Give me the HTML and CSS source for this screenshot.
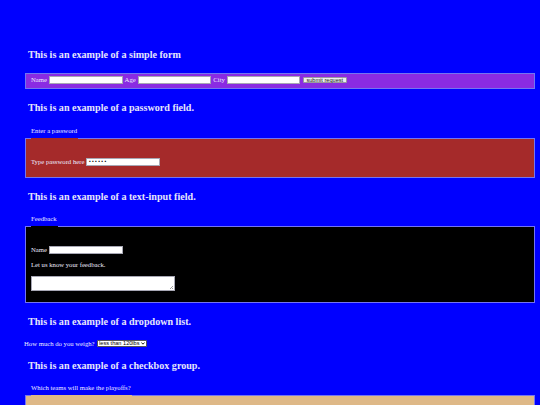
FILE: index.html
```html
<!DOCTYPE html>
<html lang="en">
<head>
<meta charset="utf-8">
<title>Form examples</title>
<link rel="stylesheet" href="styles.css">
</head>
<body>
<div class="page">
  <h2 class="title">This is an example of a simple form</h2>
  <fieldset class="box box-violet">
    <div class="row">
      <label>Name</label><input class="field" type="text">
      <label>Age</label><input class="field" type="text">
      <label>City</label><input class="field" type="text">
      <button class="btn" type="button">submit request</button>
    </div>
  </fieldset>

  <h2 class="title">This is an example of a password field.</h2>
  <fieldset class="box box-brown">
    <legend class="legend">Enter a password</legend>
    <div class="row">
      <label>Type password here</label><input class="field field-pass" type="password" value="secret">
    </div>
  </fieldset>

  <h2 class="title">This is an example of a text-input field.</h2>
  <fieldset class="box box-black">
    <legend class="legend">Feedback</legend>
    <div class="stack">
      <div class="row">
        <label>Name</label><input class="field" type="text">
      </div>
      <div class="line">Let us know your feedback.</div>
      <textarea class="area"></textarea>
    </div>
  </fieldset>

  <h2 class="title">This is an example of a dropdown list.</h2>
  <div class="row row-select">
    <label>How much do you weigh?</label>
    <span class="select-wrap">
      <select class="select">
        <option>less than 120lbs</option>
        <option>120 - 160lbs</option>
        <option>more than 160lbs</option>
      </select>
      <svg class="chev" width="4" height="3" viewBox="0 0 4 3"><polyline points="0.4,0.5 2,2.2 3.6,0.5" fill="none" stroke="#000" stroke-width="0.9"/></svg>
    </span>
  </div>

  <h2 class="title">This is an example of a checkbox group.</h2>
  <fieldset class="box box-tan">
    <legend class="legend">Which teams will make the playoffs?</legend>
    <div class="tan-body"></div>
  </fieldset>
</div>
</body>
</html>
```

FILE: styles.css
```css
html, body {
  margin: 0;
  padding: 0;
  background: #0000ff;
}

body {
  font-family: "Liberation Serif", "Times New Roman", serif;
  font-size: 6.7px;
  color: #ececff;
}

.page {
  padding: 36px 3px 40px 23px;
}

.title {
  font-size: 10.1px;
  line-height: 12px;
  font-weight: bold;
  margin: 12.6px 0 12.6px 5px;
  color: #e6e6fb;
}

.box {
  margin: 0 2px;
  border: 1px solid #7474f2;
  padding: 2px 5px 4px 5px;
  min-width: 0;
}

.box-violet { background: #8a2be2; }
.box-brown { background: #a52a2a; padding: 8px 5px 11px 5px; }
.box-black { background: #000000; padding: 8px 5px 11px 5px; }
.box-tan { background: #deb887; padding: 8px 5px 11px 5px; }

.tan-body {
  height: 40px;
}

.legend {
  font-size: 6.7px;
  line-height: 8px;
  padding: 0 1px 15px 0;
  color: #ececff;
}

.row {
  display: flex;
  align-items: center;
  gap: 2px;
  height: 8.3px;
  line-height: 8px;
}

.stack {
  display: flex;
  flex-direction: column;
  align-items: flex-start;
  gap: 6.7px;
}

.line {
  line-height: 8px;
}

.field {
  box-sizing: border-box;
  width: 73.6px;
  height: 8.3px;
  margin: 0;
  padding: 0 1px;
  border: 1px solid #a7a7b4;
  background: #ffffff;
  font-family: "Liberation Sans", Arial, sans-serif;
  font-size: 5.6px;
  color: #000;
  outline: none;
}

.field-pass {
  font-family: "DejaVu Sans", sans-serif;
  font-size: 4.6px;
  letter-spacing: 0.4px;
  color: #000;
}

.btn {
  box-sizing: border-box;
  height: 6px;
  margin: 0 0 0 0.5px;
  padding: 0 2.5px;
  border: 1px solid #9a9aa0;
  border-radius: 1px;
  background: #efefef;
  font-family: "Liberation Sans", Arial, sans-serif;
  font-size: 5.6px;
  line-height: 3.6px;
  color: #111;
}

.area {
  box-sizing: border-box;
  display: block;
  width: 144px;
  height: 15.3px;
  margin: 0;
  padding: 1px;
  border: 1px solid #a7a7b4;
  resize: none;
  outline: none;
  background:
    linear-gradient(135deg, transparent 0 55%, #a0a0a0 55% 66%, transparent 66% 77%, #a0a0a0 77% 88%, transparent 88%) no-repeat right 1px bottom 1px / 4px 4px,
    #ffffff;
}

.row-select {
  height: 6.7px;
  margin-left: 1px;
}

.select-wrap {
  position: relative;
  display: inline-flex;
}

.select {
  appearance: none;
  -webkit-appearance: none;
  box-sizing: border-box;
  width: 50px;
  height: 6.7px;
  margin: 0;
  padding: 0 5px 0 1.5px;
  border: 1px solid #555;
  border-radius: 1px;
  background: #ffffff;
  font-family: "Liberation Sans", Arial, sans-serif;
  font-size: 5.6px;
  line-height: 4.7px;
  color: #000;
}

.chev {
  position: absolute;
  right: 1.5px;
  top: 2px;
  pointer-events: none;
}
```
